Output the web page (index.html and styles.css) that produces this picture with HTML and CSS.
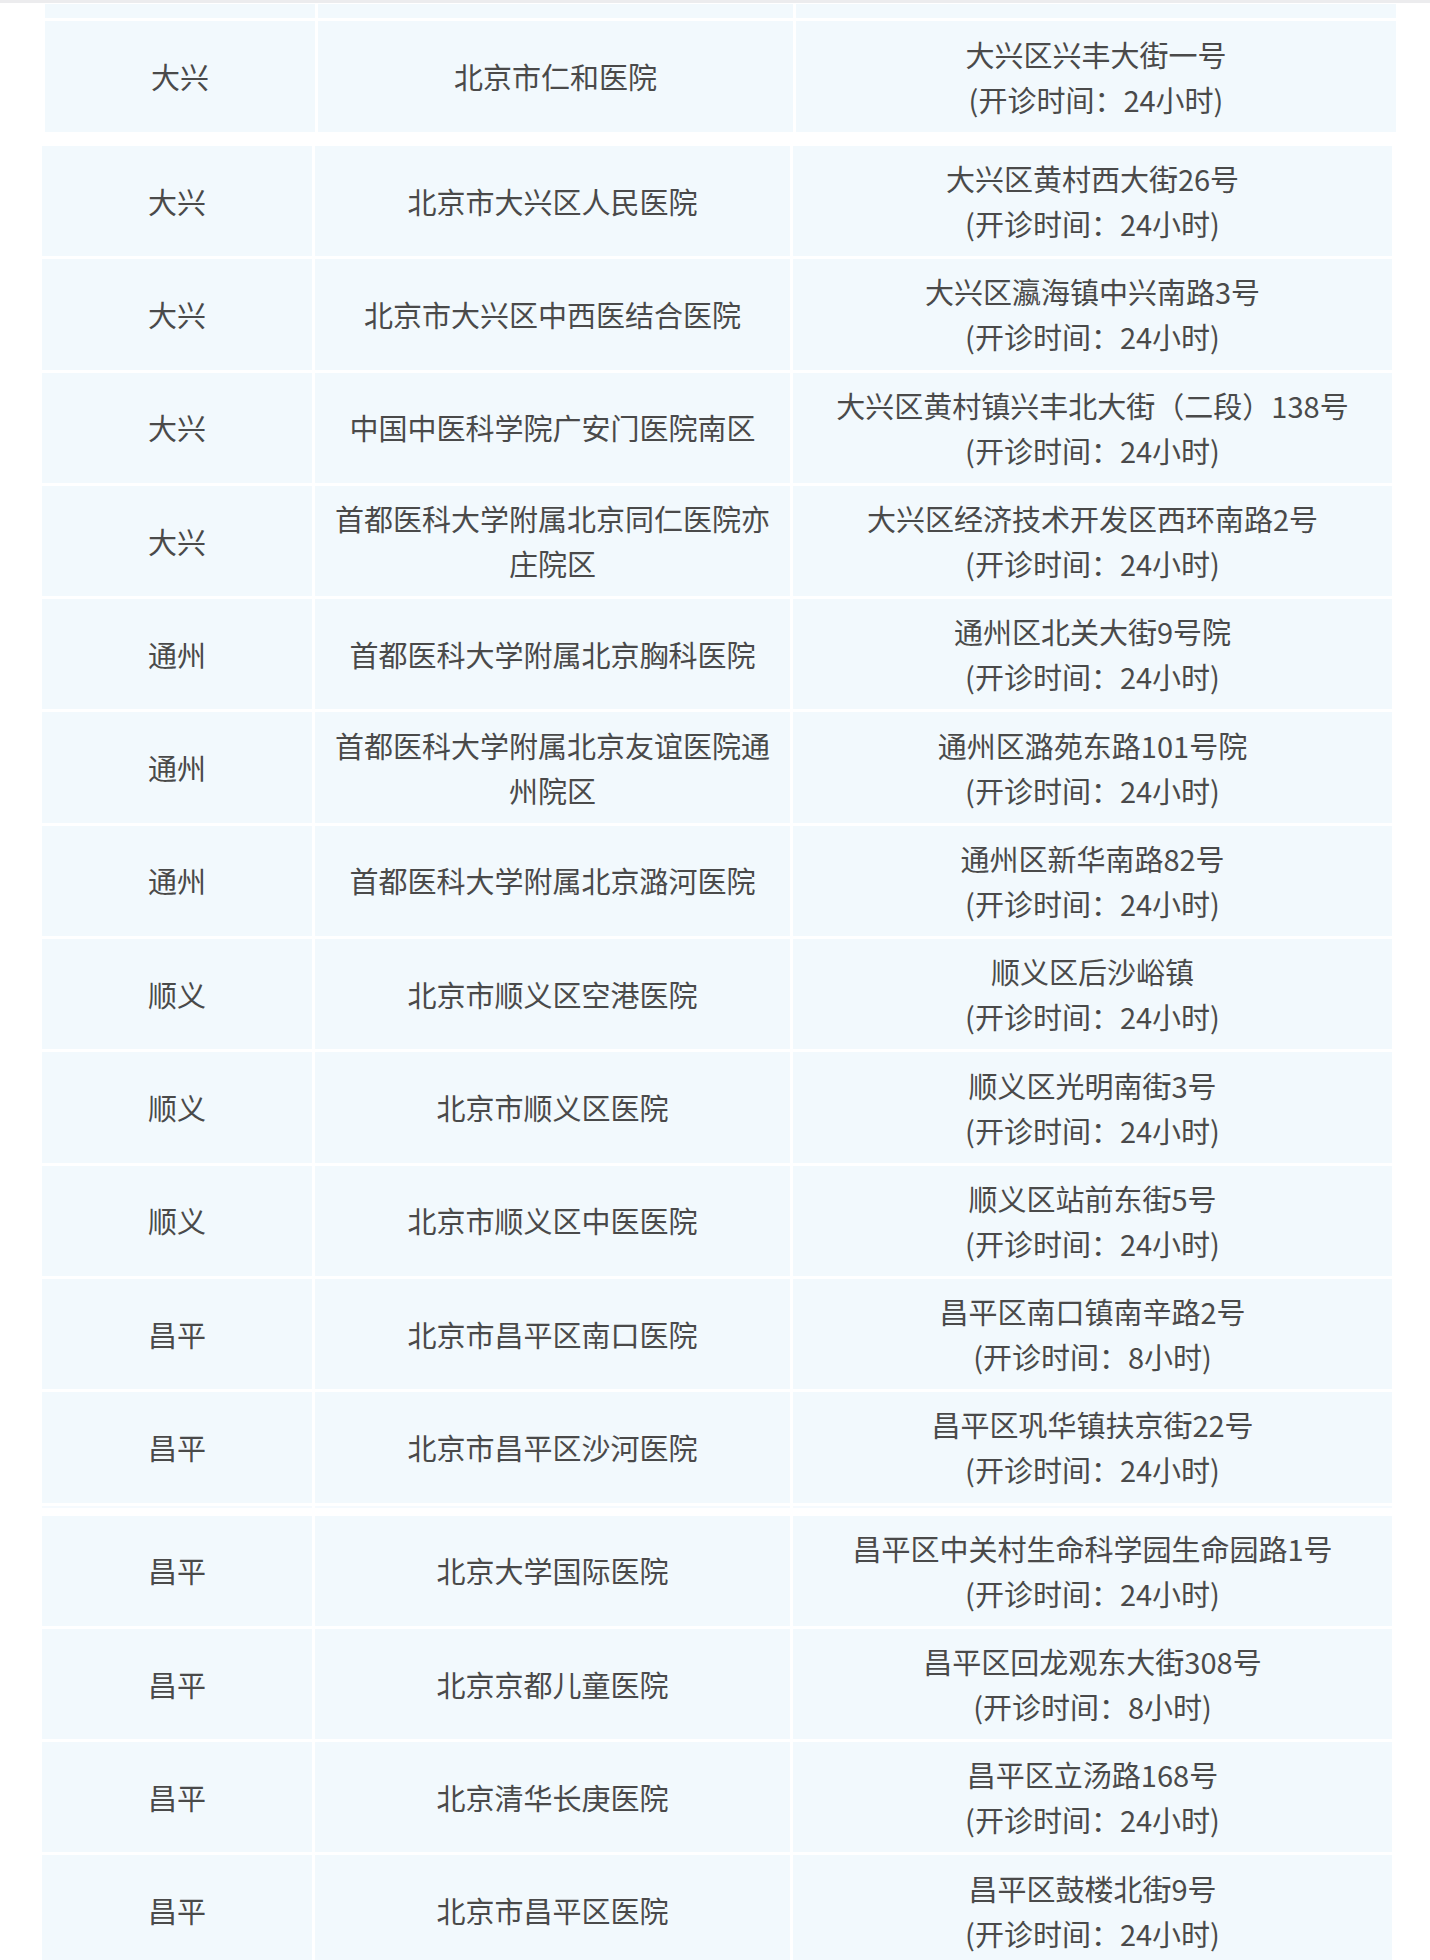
FILE: index.html
```html
<!DOCTYPE html>
<html lang="zh-CN">
<head>
<meta charset="utf-8">
<title>医院列表</title>
<link rel="stylesheet" href="styles.css">
</head>
<body>
<div class="topline"></div>

<table class="tbl tbl-first">
  <colgroup><col class="c1"><col class="c2"><col class="c3"></colgroup>
  <tr class="stub"><td></td><td></td><td></td></tr>
  <tr class="row r111"><td>大兴</td><td>北京市仁和医院</td><td>大兴区兴丰大街一号<br>(开诊时间：24小时)</td></tr>
</table>

<table class="tbl tbl-main">
  <colgroup><col class="c1"><col class="c2"><col class="c3"></colgroup>
  <tr class="row"><td>大兴</td><td>北京市大兴区人民医院</td><td>大兴区黄村西大街26号<br>(开诊时间：24小时)</td></tr>
  <tr class="row"><td>大兴</td><td>北京市大兴区中西医结合医院</td><td>大兴区瀛海镇中兴南路3号<br>(开诊时间：24小时)</td></tr>
  <tr class="row"><td>大兴</td><td>中国中医科学院广安门医院南区</td><td>大兴区黄村镇兴丰北大街（二段）138号<br>(开诊时间：24小时)</td></tr>
  <tr class="row"><td>大兴</td><td>首都医科大学附属北京同仁医院亦庄院区</td><td>大兴区经济技术开发区西环南路2号<br>(开诊时间：24小时)</td></tr>
  <tr class="row"><td>通州</td><td>首都医科大学附属北京胸科医院</td><td>通州区北关大街9号院<br>(开诊时间：24小时)</td></tr>
  <tr class="row"><td>通州</td><td>首都医科大学附属北京友谊医院通州院区</td><td>通州区潞苑东路101号院<br>(开诊时间：24小时)</td></tr>
  <tr class="row"><td>通州</td><td>首都医科大学附属北京潞河医院</td><td>通州区新华南路82号<br>(开诊时间：24小时)</td></tr>
  <tr class="row"><td>顺义</td><td>北京市顺义区空港医院</td><td>顺义区后沙峪镇<br>(开诊时间：24小时)</td></tr>
  <tr class="row"><td>顺义</td><td>北京市顺义区医院</td><td>顺义区光明南街3号<br>(开诊时间：24小时)</td></tr>
  <tr class="row"><td>顺义</td><td>北京市顺义区中医医院</td><td>顺义区站前东街5号<br>(开诊时间：24小时)</td></tr>
  <tr class="row"><td>昌平</td><td>北京市昌平区南口医院</td><td>昌平区南口镇南辛路2号<br>(开诊时间：8小时)</td></tr>
  <tr class="row"><td>昌平</td><td>北京市昌平区沙河医院</td><td>昌平区巩华镇扶京街22号<br>(开诊时间：24小时)</td></tr>
</table>

<div class="strip"><span></span><span></span><span></span></div>

<table class="tbl tbl-last">
  <colgroup><col class="c1"><col class="c2"><col class="c3"></colgroup>
  <tr class="row"><td>昌平</td><td>北京大学国际医院</td><td>昌平区中关村生命科学园生命园路1号<br>(开诊时间：24小时)</td></tr>
  <tr class="row"><td>昌平</td><td>北京京都儿童医院</td><td>昌平区回龙观东大街308号<br>(开诊时间：8小时)</td></tr>
  <tr class="row"><td>昌平</td><td>北京清华长庚医院</td><td>昌平区立汤路168号<br>(开诊时间：24小时)</td></tr>
  <tr class="row"><td>昌平</td><td>北京市昌平区医院</td><td>昌平区鼓楼北街9号<br>(开诊时间：24小时)</td></tr>
</table>
</body>
</html>
```
FILE: styles.css
```css
html, body {
  margin: 0;
  padding: 0;
  background: #ffffff;
}

body {
  font-family: "Noto Sans CJK SC", "Noto Sans", sans-serif;
  color: #4a4a4a;
  font-size: 29px;
  line-height: 45px;
}

.topline {
  height: 3px;
  background: #ececee;
}

.tbl {
  border-collapse: separate;
  border-spacing: 3px;
  table-layout: fixed;
}

.tbl td {
  background: #f2f9fd;
  text-align: center;
  vertical-align: middle;
  padding: 0 12px;
}

.tbl .c1 { width: 270px; }
.tbl .c2 { width: 475px; }
.tbl .c3 { width: 599px; }

.tbl-first {
  margin: -2px 0 0 42px;
  width: 1357px;
}

.tbl-first .c3 { width: 600px; }

.tbl-first .stub td {
  height: 14px;
  padding: 0;
}

.tbl-main {
  margin: 8px 0 0 39px;
  width: 1356px;
}

.row td {
  height: 110.3px;
  box-sizing: border-box;
}

.tbl-first .r111 td { height: 111px; }

.strip {
  display: flex;
  gap: 3px;
  margin: 0 0 0 42px;
  width: 1350px;
  height: 2px;
}

.strip span {
  height: 2px;
  background: #f5fafe;
}

.strip span:nth-child(1) { width: 270px; }
.strip span:nth-child(2) { width: 475px; }
.strip span:nth-child(3) { width: 599px; }

.tbl-last {
  margin: 5px 0 0 39px;
  width: 1356px;
}
```
